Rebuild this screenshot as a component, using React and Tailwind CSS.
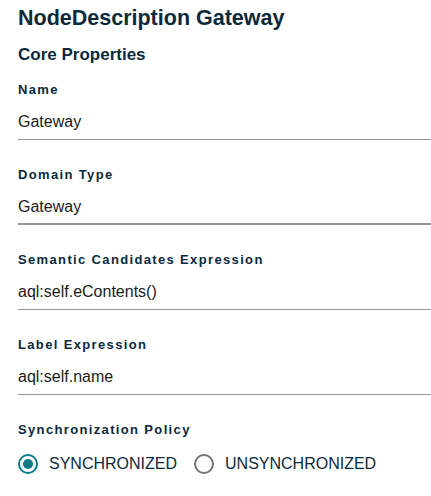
import React, { useState } from "react";

const fields = [
  { label: "Name", value: "Gateway" },
  { label: "Domain Type", value: "Gateway", thick: true },
  { label: "Semantic Candidates Expression", value: "aql:self.eContents()" },
  { label: "Label Expression", value: "aql:self.name" },
];

function Radio({ checked, label, onClick }) {
  return (
    <button onClick={onClick} className="flex items-center gap-[11px] mr-[17px]">
      <svg width="20" height="20" viewBox="0 0 20 20">
        <circle
          cx="10"
          cy="10"
          r="9"
          fill="none"
          stroke={checked ? "#0e7b86" : "#757575"}
          strokeWidth="2"
        />
        {checked && <circle cx="10" cy="10" r="5" fill="#0e7b86" />}
      </svg>
      <span className="text-[16px] leading-[20px] text-[#0a2a3c]">{label}</span>
    </button>
  );
}

export default function App() {
  const [policy, setPolicy] = useState("SYNCHRONIZED");

  return (
    <div className="pl-[18px] pt-[5px] bg-white text-[#0a2a3c] font-['Liberation_Sans',Arial,sans-serif]">
      <h1 className="text-[21.5px] leading-[26px] font-bold">NodeDescription Gateway</h1>
      <h2 className="mt-[14px] text-[17px] leading-[20px] font-bold">Core Properties</h2>

      <div className="mt-[17px] flex flex-col gap-[27px]">
        {fields.map((f) => (
          <div key={f.label}>
            <div className="text-[13px] leading-[16px] font-bold tracking-[1.35px]">{f.label}</div>
            <div
              className={
                "mt-[14px] text-[16px] leading-[20px] text-[#1b1b1b] " +
                (f.thick ? "pb-[6px] border-b-2 border-[#949494]" : "pb-[7px] border-b border-[#949494]")
              }
            >
              {f.value}
            </div>
          </div>
        ))}

        <div>
          <div className="text-[13px] leading-[16px] font-bold tracking-[1.35px]">Synchronization Policy</div>
          <div className="mt-[16px] flex items-center">
            <Radio
              checked={policy === "SYNCHRONIZED"}
              label="SYNCHRONIZED"
              onClick={() => setPolicy("SYNCHRONIZED")}
            />
            <Radio
              checked={policy === "UNSYNCHRONIZED"}
              label="UNSYNCHRONIZED"
              onClick={() => setPolicy("UNSYNCHRONIZED")}
            />
          </div>
        </div>
      </div>
    </div>
  );
}
